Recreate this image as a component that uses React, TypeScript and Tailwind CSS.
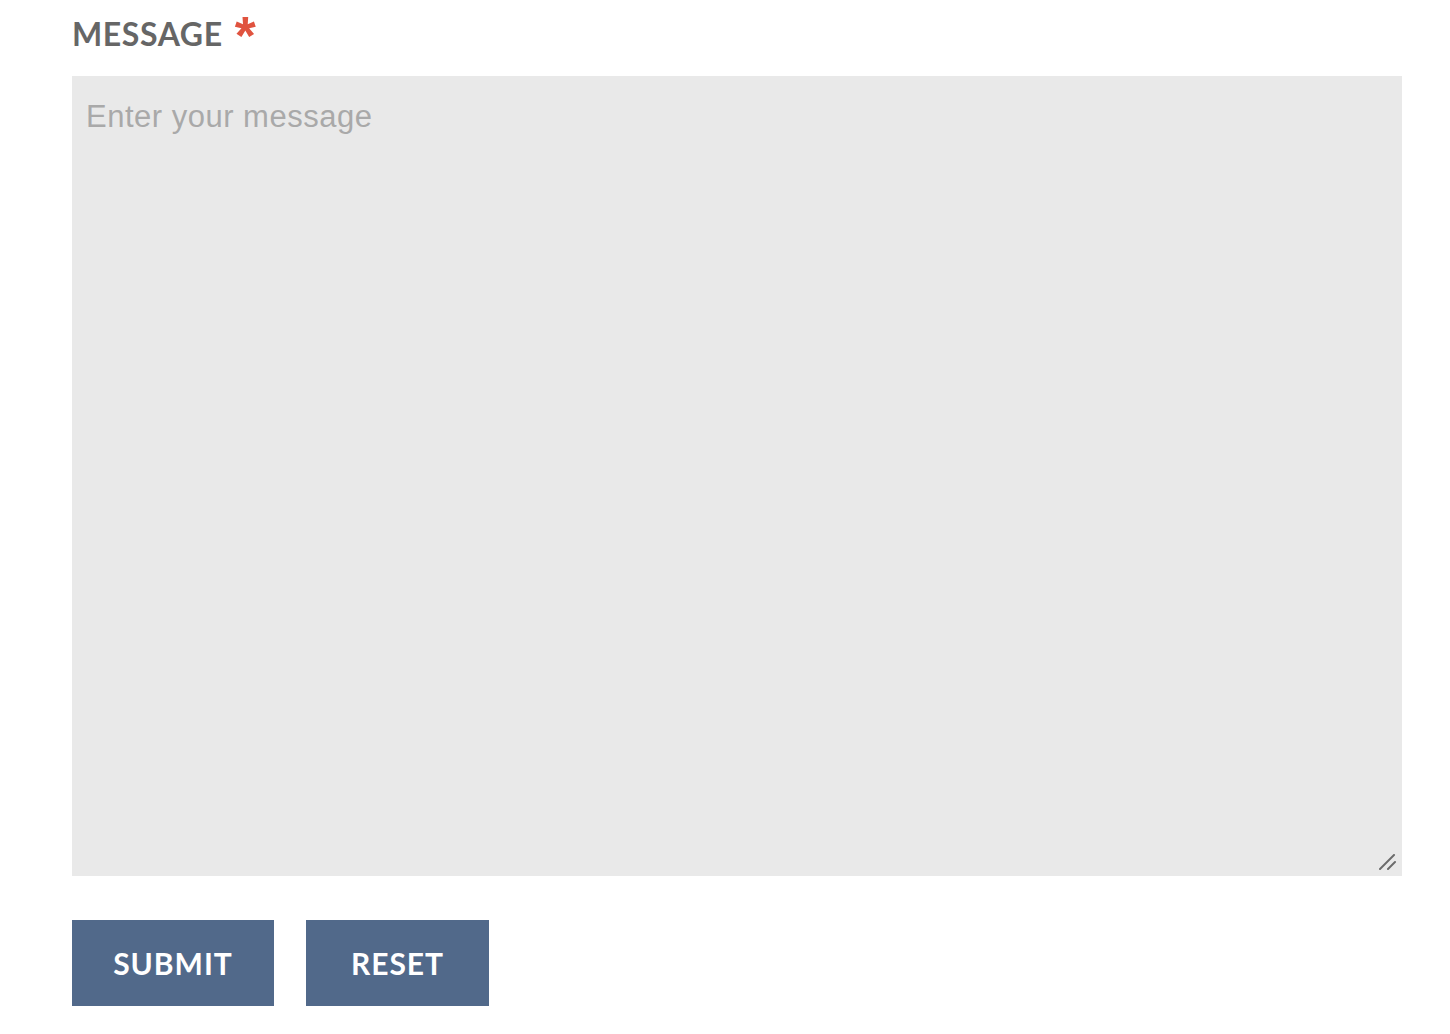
import React from "react";

export default function App() {
  return (
    <div className="min-h-[1034px] w-[1450px] bg-white">
      <div className="pl-[72px] pr-[48px] pt-[14px]">
        <label
          className="flex h-[40px] items-start text-[32px] font-bold leading-[40px] tracking-[0.6px] text-[#666666]"
          style={{ fontFamily: '"Lato", "Open Sans", sans-serif' }}
        >
          <span>MESSAGE</span>
          <span
            className="ml-[12px] mt-[-6px] h-[40px] text-[#e0533f] text-[54px] leading-[54px] font-bold"
            style={{ fontFamily: '"Liberation Sans", Arial, sans-serif' }}
          >
            *
          </span>
        </label>
        <div className="relative mt-[22px] h-[800px] w-[1330px]">
          <textarea
            placeholder="Enter your message"
            className="block h-full w-full resize-none bg-[#e9e9e9] px-[14px] pt-[23px] text-[31px] leading-[36px] tracking-[0.5px] text-[#444] outline-none placeholder:text-[#a9a9a9]"
            style={{ fontFamily: '"Liberation Sans", Arial, sans-serif' }}
          />
          <svg
            className="pointer-events-none absolute right-[5px] bottom-[6px]"
            width="18"
            height="16"
            viewBox="0 0 18 16"
          >
            <line x1="1" y1="15" x2="15" y2="1" stroke="#6b6b6b" strokeWidth="2" strokeLinecap="round" />
            <line x1="9" y1="15" x2="16" y2="8" stroke="#6b6b6b" strokeWidth="2" strokeLinecap="round" />
          </svg>
        </div>
        <div className="mt-[44px] flex gap-[32px]">
          <button
            className="h-[86px] w-[202px] bg-[#51698a] text-[30px] font-bold tracking-[1px] text-white"
            style={{ fontFamily: '"Lato", "Open Sans", sans-serif' }}
          >
            SUBMIT
          </button>
          <button
            className="h-[86px] w-[183px] bg-[#51698a] text-[30px] font-bold tracking-[1px] text-white"
            style={{ fontFamily: '"Lato", "Open Sans", sans-serif' }}
          >
            RESET
          </button>
        </div>
      </div>
    </div>
  );
}
